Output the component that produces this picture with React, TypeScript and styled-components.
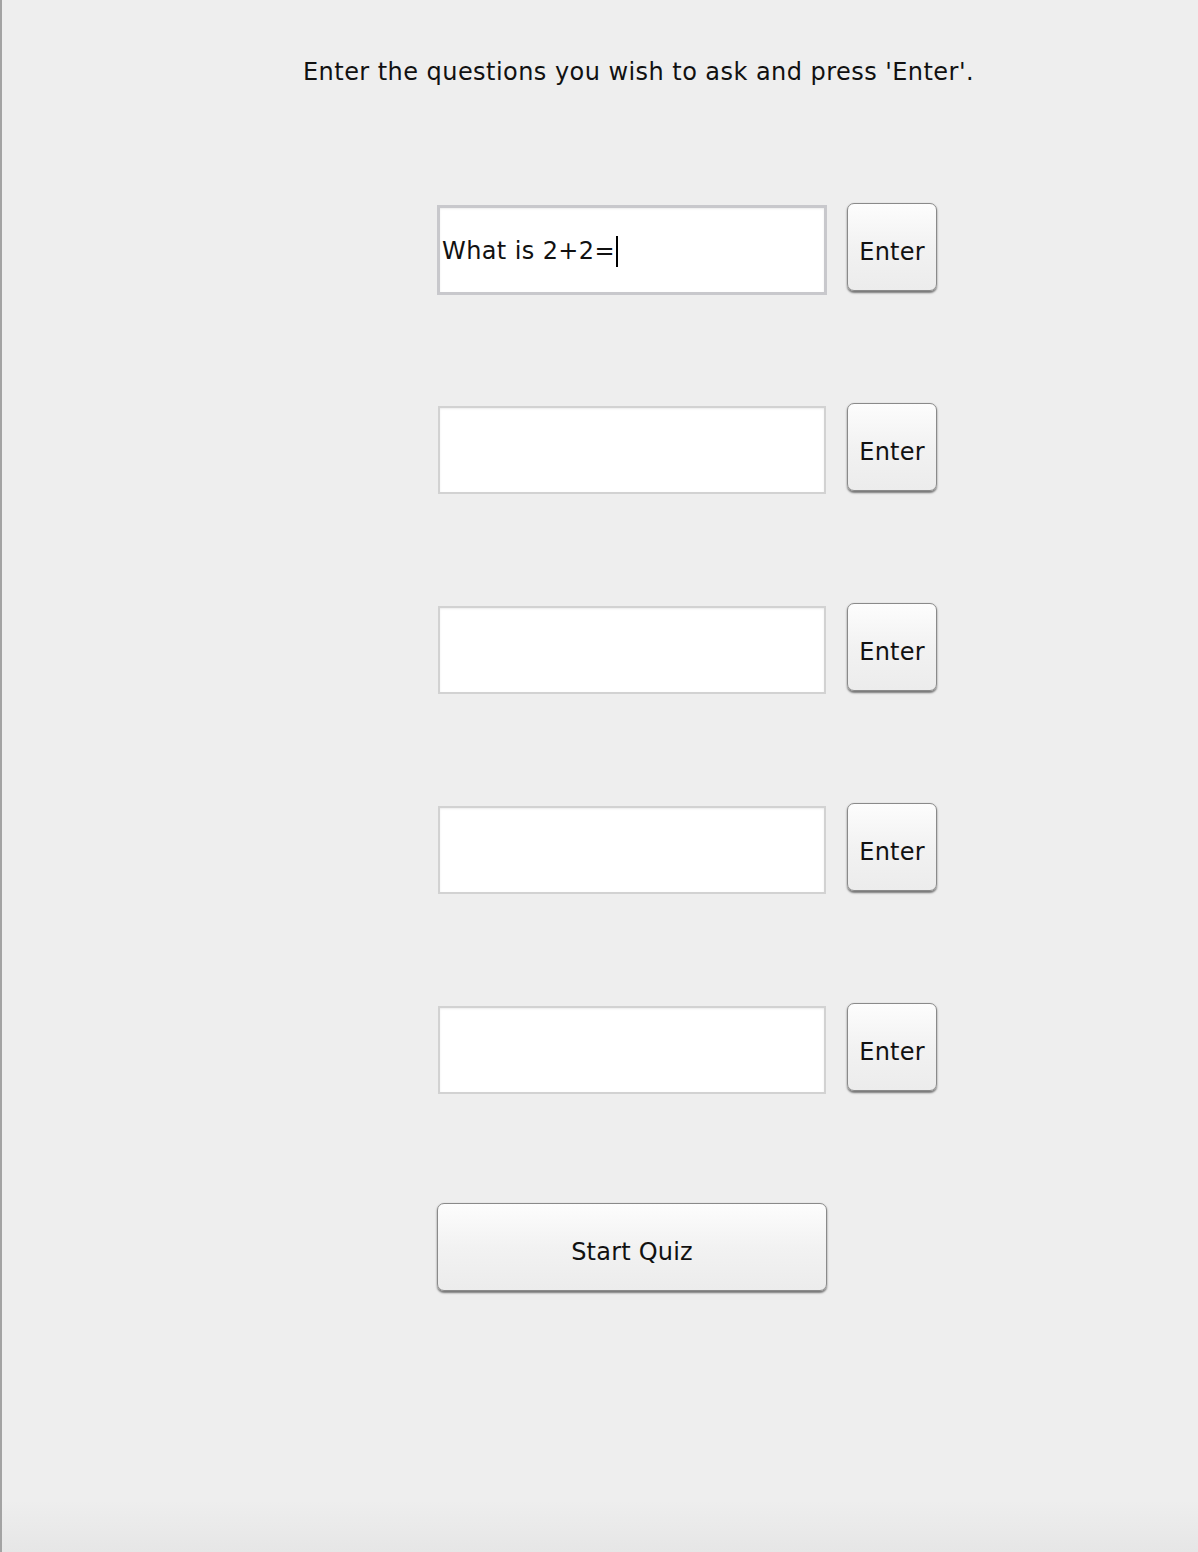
import React from "react";
import styled, { createGlobalStyle } from "styled-components";

const Global = createGlobalStyle`
  html, body { margin: 0; padding: 0; background: #eeeeee; }
  body { font-family: "DejaVu Sans", "Liberation Sans", sans-serif; }
`;

const Window = styled.div`
  position: relative;
  width: 1198px;
  height: 1552px;
  box-sizing: border-box;
  border-left: 2px solid #a3a3a3;
  background: linear-gradient(to bottom, #eeeeee 0, #eeeeee 1500px, #e6e6e6 1552px);
  display: flex;
  flex-direction: column;
  overflow: hidden;
`;

const Title = styled.div`
  margin: 57px 0 0 301px;
  height: 30px;
  font-size: 24px;
  line-height: 30px;
  color: #111;
  white-space: nowrap;
  letter-spacing: 0.45px;
`;

const Column = styled.div`
  margin: 116px 0 0 435px;
  display: flex;
  flex-direction: column;
  gap: 110px;
`;

const Row = styled.div`
  display: flex;
  align-items: flex-start;
  gap: 20px;
  height: 90px;
`;

const Field = styled.div<{ $focused?: boolean }>`
  box-sizing: border-box;
  width: ${(p) => (p.$focused ? 390 : 388)}px;
  height: ${(p) => (p.$focused ? 90 : 88)}px;
  margin: ${(p) => (p.$focused ? "2px 0 0 0" : "3px 1px 0 1px")};
  background: #fff;
  border: ${(p) => (p.$focused ? "3px solid #c8c8cc" : "2px solid #d2d2d2")};
  box-shadow: inset 0 1px 2px rgba(0, 0, 0, 0.08);
  display: flex;
  align-items: center;
  padding: 2px 0 0 2px;
  font-size: 24px;
  letter-spacing: 0.4px;
  color: #111;
  white-space: nowrap;
`;

const Caret = styled.span`
  display: inline-block;
  width: 2px;
  height: 31px;
  background: #000;
  margin-left: 1px;
  vertical-align: middle;
`;

const Button = styled.div<{ $wide?: boolean }>`
  box-sizing: border-box;
  width: ${(p) => (p.$wide ? 390 : 90)}px;
  height: 88px;
  border: 1px solid #8a8a8a;
  border-radius: 7px;
  background: linear-gradient(to bottom, #fdfdfd 0%, #f2f2f2 50%, #ececec 100%);
  box-shadow: 0 1.5px 2px rgba(0, 0, 0, 0.5);
  display: flex;
  align-items: center;
  justify-content: center;
  padding-top: 9px;
  font-size: 24px;
  letter-spacing: 0.2px;
  color: #111;
  white-space: nowrap;
`;

export default function App() {
  const rows = ["What is 2+2=", "", "", "", ""];
  return (
    <>
      <Global />
      <Window>
        <Title>Enter the questions you wish to ask and press 'Enter'.</Title>
        <Column>
          {rows.map((v, i) => (
            <Row key={i}>
              <Field $focused={i === 0}>
                {v}
                {i === 0 && <Caret />}
              </Field>
              <Button>Enter</Button>
            </Row>
          ))}
          <Row>
            <Button $wide>Start Quiz</Button>
          </Row>
        </Column>
      </Window>
    </>
  );
}
